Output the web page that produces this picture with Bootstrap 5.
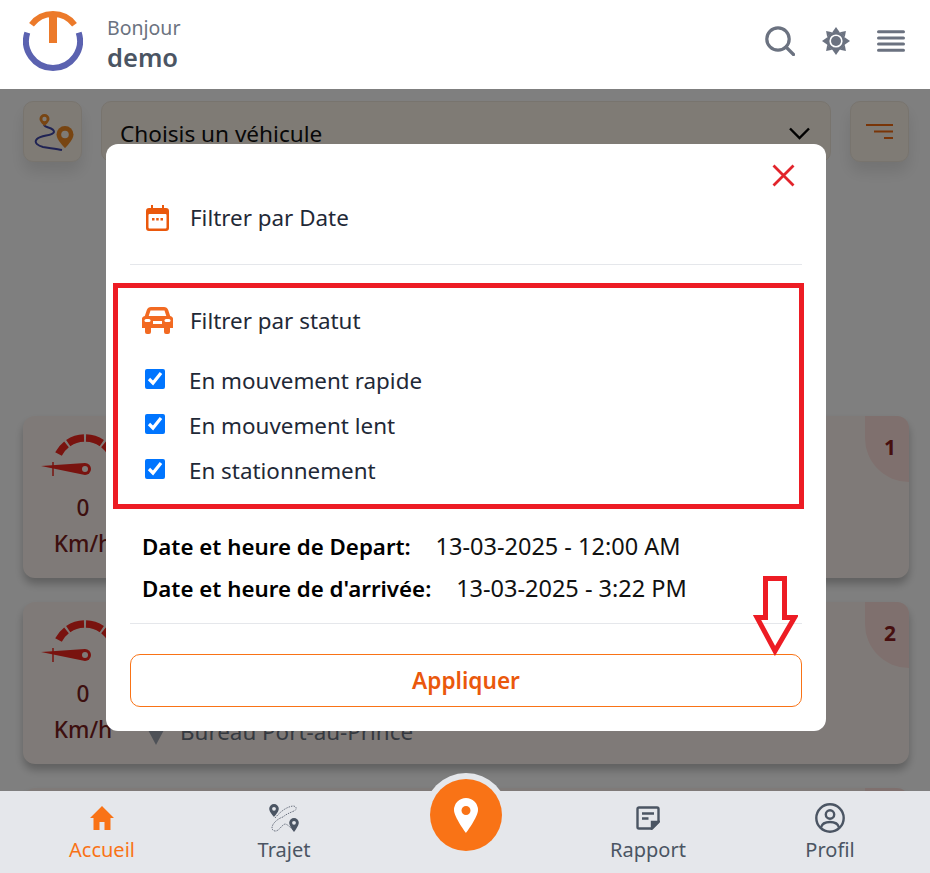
<!DOCTYPE html>
<html lang="fr">
<head>
  <meta charset="UTF-8" />
  <meta name="viewport" content="width=device-width, initial-scale=1.0" />
  <title>Accueil</title>
  <link href="https://cdn.jsdelivr.net/npm/bootstrap@5.3.0/dist/css/bootstrap.min.css" rel="stylesheet" />
  <style>
    body {
      font-family: "Noto Sans", "Open Sans", sans-serif;
      background-color: #fff;
      height: 873px;
      overflow: hidden;
    }
    .top-bar {
      height: 89px;
      padding: 11px 25px 0 23px;
      background: #fff;
    }
    .hello {
      font-size: 19.5px;
      line-height: 26px;
      color: #6b7280;
    }
    .user-name {
      font-size: 25.5px;
      line-height: 32px;
      font-weight: 600;
      color: #4b5563;
    }
    .top-icons {
      gap: 27px;
      padding-top: 15px;
    }
    .page-body {
      padding: 12px 21px 0 23px;
    }
    .tool-row {
      gap: 19px;
    }
    .square-btn {
      width: 59px;
      height: 61px;
      flex: none;
      border-radius: 10px;
      background: #fef6ea;
      border: 1px solid #f1e9dd;
      box-shadow: 0 10px 15px rgba(0, 0, 0, .1);
    }
    .vehicle-select {
      height: 61px;
      border-radius: 10px;
      background: #fef6ea;
      border: 1px solid #f1e9dd;
      padding: 5px 20px 0 18px;
      font-size: 22.6px;
      color: #111;
    }
    .vehicle-select svg {
      margin-top: -2px;
    }
    .map-space {
      height: 254px;
    }
    .trip-card {
      height: 162px;
      margin-bottom: 24px;
      background: #fff5f0;
      border-radius: 12px;
      box-shadow: 0 6px 8px rgba(0, 0, 0, .25);
      position: relative;
      overflow: hidden;
      padding: 17px 0 0 17px;
    }
    .speed-box {
      width: 86px;
      flex: none;
      text-align: center;
      color: #7a1e1e;
      font-size: 22.6px;
      font-weight: 500;
    }
    .speed-box svg {
      display: block;
    }
    .speed-box div {
      line-height: 36px;
    }
    .rank-tab {
      position: absolute;
      top: 0;
      right: 0;
      width: 44px;
      height: 66px;
      background: #ffe0dc;
      border-bottom-left-radius: 44px;
      text-align: right;
      padding: 16px 13px 0 0;
      font-size: 21px;
      font-weight: 700;
      color: #8e1f1f;
    }
    .place {
      font-size: 22.4px;
      color: #6b7280;
      margin: 97px 0 0 21px;
      height: 32px;
    }
    .place svg {
      margin: 9px 15px 0 0;
    }
    .shade {
      position: absolute;
      inset: 89px 0 0 0;
      background: rgba(0, 0, 0, .5);
    }
    .filter-box {
      position: absolute;
      top: 144px;
      left: 106px;
      width: 720px;
      height: 587px;
      background: #fff;
      border: 0;
      border-radius: 12px;
      color: #1f2937;
      padding: 20px 24px 0;
    }
    .close-x {
      position: absolute;
      top: 20px;
      right: 31px;
      line-height: 0;
    }
    .filter-head {
      font-size: 22.4px;
      display: flex;
      align-items: center;
    }
    .date-head {
      height: 101px;
      padding: 7px 0 0 16px;
      border-bottom: 1px solid #e5e7eb;
    }
    .date-head svg {
      margin-right: 21px;
    }
    .status-frame {
      width: 691px;
      height: 226px;
      margin: 18px 0 0 -17px;
      border: 5px solid #ed1c24;
      padding: 16px 0 0 24px;
    }
    .status-frame .filter-head svg {
      margin-right: 17px;
    }
    .status-list {
      margin-top: 21px;
    }
    .status-list .form-check {
      display: flex;
      align-items: center;
      margin: 0;
      padding: 0 0 0 3px;
      height: 45px;
    }
    .status-list .form-check-input {
      width: 20px;
      height: 20px;
      margin: -4px 24px 0 0;
      float: none;
      flex: none;
      appearance: auto;
      -webkit-appearance: auto;
      accent-color: #0075ff;
      background-image: none;
      border: 0;
    }
    .status-list .form-check-label {
      font-size: 22.4px;
    }
    .date-lines {
      padding: 17px 0 0 12px;
      font-size: 22.3px;
      line-height: 42px;
      color: #111;
      height: 115px;
      border-bottom: 1px solid #e5e7eb;
      white-space: nowrap;
    }
    .date-lines b {
      font-weight: 600;
      color: #000;
      margin-right: 19px;
    }
    .date-value {
      font-size: 23.5px;
      line-height: 1;
    }
    .apply-btn {
      display: block;
      width: 100%;
      height: 53px;
      margin-top: 30px;
      background: #fff;
      border: 1px solid #f97316;
      border-radius: 10px;
      color: #ea580c;
      font-size: 22.6px;
      font-weight: 600;
      padding: 0;
    }
    .note-arrow {
      position: absolute;
      left: 753px;
      top: 575px;
    }
    .bottom-nav {
      height: 82px;
      background: #e5e7eb;
      position: relative;
      padding: 0 9px 0 11px;
    }
    .nav-item-box {
      flex: 1 1 0;
      text-align: center;
      font-size: 20px;
      line-height: 28px;
      color: #4b5563;
      padding-top: 11px;
    }
    .icon-slot {
      height: 32px;
      margin-bottom: 2px;
    }
    .nav-item-box.on {
      color: #f97316;
    }
    .map-fab {
      position: absolute;
      left: 424px;
      top: -18px;
      width: 84px;
      height: 84px;
      border-radius: 50%;
      background: #e5e7eb;
      padding: 6px;
    }
    .map-fab span {
      display: flex;
      width: 72px;
      height: 72px;
      border-radius: 50%;
      background: #f97316;
      align-items: center;
      justify-content: center;
    }
    .main-zone {
      height: 702px;
      overflow: hidden;
    }
  </style>
</head>
<body>
  <header class="top-bar d-flex align-items-start">
    <svg width="60" height="60" viewBox="0 0 60 60" fill="none" stroke-width="6">
      <path d="M4.300 21.700A27 27 0 1 0 55.700 21.700" stroke="#5b62b0" />
      <path d="M8.500 13.700A27 27 0 0 1 51.500 13.700" stroke="#ec7a2a" />
      <path d="M30 2V32" stroke="#ec7a2a" stroke-width="8" />
    </svg>
    <div class="ms-4">
      <div class="hello mt-1">Bonjour</div>
      <div class="user-name">demo</div>
    </div>
    <div class="ms-auto d-flex align-items-center top-icons">
      <svg width="30" height="30" viewBox="0 0 30 30" fill="none" stroke="#6b7280" stroke-width="3.200">
        <circle cx="13" cy="13" r="11.200" />
        <path d="M21 21l7.500 7.500" stroke-linecap="round" />
      </svg>
      <svg width="28" height="28" viewBox="-14 -14 28 28" fill="#6b7280">
        <circle r="9.600" />
        <polygon points="-3.500,-9 0,-14 3.500,-9" />
        <polygon points="-3.500,-9 0,-14 3.500,-9" transform="rotate(45)" />
        <polygon points="-3.500,-9 0,-14 3.500,-9" transform="rotate(90)" />
        <polygon points="-3.500,-9 0,-14 3.500,-9" transform="rotate(135)" />
        <polygon points="-3.500,-9 0,-14 3.500,-9" transform="rotate(180)" />
        <polygon points="-3.500,-9 0,-14 3.500,-9" transform="rotate(225)" />
        <polygon points="-3.500,-9 0,-14 3.500,-9" transform="rotate(270)" />
        <polygon points="-3.500,-9 0,-14 3.500,-9" transform="rotate(315)" />
        <circle r="6.600" fill="#fff" />
        <circle r="5" />
      </svg>
      <svg width="28" height="22" viewBox="0 0 28 22" stroke="#6b7280" stroke-width="3" stroke-linecap="round">
        <path d="M1.500 1.700h25M1.500 8h25M1.500 14h25M1.500 20.300h25" />
      </svg>
    </div>
  </header>

  <div class="main-zone">
    <main class="page-body">
      <div class="d-flex tool-row">
        <button class="square-btn d-flex align-items-center justify-content-center p-0" type="button" aria-label="Trajet">
          <svg width="42" height="42" viewBox="0 0 42 42" fill="none">
            <path d="M12 14c1 3 10 2 10 7-1 4-13 3-17 7-4 4 2 7 6 8 6 1 14 2 19 3" stroke="#3f46a8" stroke-width="2" />
            <path d="M12.500 3a5 5 0 0 1 5 5C17.500 11 12.500 15 12.500 15S7.500 11 7.500 8A5 5 0 0 1 12.500 3z" fill="#f08a24" />
            <circle cx="12.500" cy="8" r="2.200" fill="#fef6ea" />
            <path d="M33 15a8.500 8.500 0 0 1 8.500 8.500C41.500 29 33 37 33 37s-8.500-8-8.500-13.500A8.500 8.500 0 0 1 33 15z" fill="#f08a24" />
            <circle cx="33" cy="23.500" r="3.800" fill="#fef6ea" />
          </svg>
        </button>
        <div class="vehicle-select d-flex align-items-center justify-content-between flex-grow-1">
          <span>Choisis un véhicule</span>
          <svg width="21" height="13" viewBox="0 0 21 13" fill="none" stroke="#000" stroke-width="2.400"><path d="M1 1.500l9.500 9.500L20 1.500" /></svg>
        </div>
        <button class="square-btn d-flex align-items-center justify-content-center p-0" type="button" aria-label="Filtrer">
          <svg width="28" height="18" viewBox="0 0 28 18" stroke="#f26a10" stroke-width="2.200"><path d="M0 2h27M8 8.500h19M18 15h9" /></svg>
        </button>
      </div>

      <div class="map-space"></div>

      <section class="trip-card d-flex">
        <div class="speed-box">
          <svg width="86" height="57" viewBox="0 0 86 57">
            <path d="M18.500 21A30 30 0 0 1 26.500 11.400M28.200 10.100A30 30 0 0 1 44 5M46 5A30 30 0 0 1 61.800 10.100M63.500 11.400A30 30 0 0 1 71.500 21" fill="none" stroke="#f2261e" stroke-width="7.500" />
            <path d="M1 33L45 30a6 6 0 1 1 0 12z" fill="#f2261e" />
            <circle cx="45" cy="36" r="3" fill="#fff5f0" />
            <path d="M13 29v14" stroke="#f2261e" stroke-width="1.500" />
          </svg>
          <div>0</div>
          <div>Km/h</div>
        </div>
        <div class="rank-tab">1</div>
      </section>

      <section class="trip-card d-flex">
        <div class="speed-box">
          <svg width="86" height="57" viewBox="0 0 86 57">
            <path d="M18.500 21A30 30 0 0 1 26.500 11.400M28.200 10.100A30 30 0 0 1 44 5M46 5A30 30 0 0 1 61.800 10.100M63.500 11.400A30 30 0 0 1 71.500 21" fill="none" stroke="#f2261e" stroke-width="7.500" />
            <path d="M1 33L45 30a6 6 0 1 1 0 12z" fill="#f2261e" />
            <circle cx="45" cy="36" r="3" fill="#fff5f0" />
            <path d="M13 29v14" stroke="#f2261e" stroke-width="1.500" />
          </svg>
          <div>0</div>
          <div>Km/h</div>
        </div>
        <div class="place d-flex align-items-center">
          <svg width="18" height="17" viewBox="0 0 18 17" fill="#9ca3af"><path d="M0 0h18L9 17z" /></svg>
          <span>Bureau Port-au-Prince</span>
        </div>
        <div class="rank-tab">2</div>
      </section>

      <section class="trip-card">
        <div class="rank-tab"></div>
      </section>
    </main>
  </div>

  <div class="shade"></div>

  <div class="modal-content filter-box">
    <button class="btn p-0 border-0 close-x" type="button" aria-label="Fermer">
      <svg width="23" height="23" viewBox="0 0 23 23" stroke="#e2242b" stroke-width="2.800"><path d="M1.500 1.500l20 20M21.500 1.500l-20 20" /></svg>
    </button>
    <div class="filter-head date-head">
      <svg width="23" height="26" viewBox="0 0 23 26" fill="#ea580c">
        <path d="M5 0h2v3h9V0h2v3h2a3 3 0 0 1 3 3v17a3 3 0 0 1-3 3H3a3 3 0 0 1-3-3V6a3 3 0 0 1 3-3h2z" />
        <rect x="2.500" y="9" width="18" height="14.500" rx="1" fill="#fff" />
        <rect x="6" y="13" width="2.500" height="2.500" />
        <rect x="10.200" y="13" width="2.500" height="2.500" />
        <rect x="14.500" y="13" width="2.500" height="2.500" />
      </svg>
      <span>Filtrer par Date</span>
    </div>

    <div class="status-frame">
      <div class="filter-head">
        <svg width="31" height="27" viewBox="0 0 31 27" fill="#f26a22">
          <path d="M9 0h13c2 0 3.500 1 4.200 3l2 6 1.300.5c.9.400 1.500 1.300 1.500 2.300V21h-3v4a2 2 0 0 1-2 2h-2a2 2 0 0 1-2-2v-4H9v4a2 2 0 0 1-2 2H5a2 2 0 0 1-2-2v-4H0v-9.200c0-1 .6-1.900 1.500-2.300L2.800 9l2-6C5.500 1 7 0 9 0zm-.5 3.500L6.700 9h17.600l-1.800-5.500z" />
          <rect x="2.500" y="12" width="6" height="3" rx="1.500" fill="#fff" />
          <rect x="22.500" y="12" width="6" height="3" rx="1.500" fill="#fff" />
          <rect x="11" y="14" width="9" height="3" fill="#fff" />
        </svg>
        <span>Filtrer par statut</span>
      </div>
      <div class="status-list">
        <div class="form-check">
          <input class="form-check-input" type="checkbox" id="fast" checked />
          <label class="form-check-label" for="fast">En mouvement rapide</label>
        </div>
        <div class="form-check">
          <input class="form-check-input" type="checkbox" id="slow" checked />
          <label class="form-check-label" for="slow">En mouvement lent</label>
        </div>
        <div class="form-check">
          <input class="form-check-input" type="checkbox" id="park" checked />
          <label class="form-check-label" for="park">En stationnement</label>
        </div>
      </div>
    </div>

    <div class="date-lines">
      <div><b>Date et heure de Depart:</b> <span class="date-value">13-03-2025 - 12:00 AM</span></div>
      <div><b>Date et heure de d'arrivée:</b> <span class="date-value">13-03-2025 - 3:22 PM</span></div>
    </div>

    <button class="apply-btn" type="button">Appliquer</button>
  </div>

  <svg class="note-arrow" width="45" height="81" viewBox="0 0 45 81" fill="none" stroke="#ed1c24" stroke-width="5">
    <path d="M12.500 3.500h19v39h10L22 76 4 42.500h8.500z" />
  </svg>

  <nav class="bottom-nav d-flex">
    <div class="nav-item-box on">
      <div class="icon-slot d-flex align-items-center justify-content-center">
        <svg width="24" height="24" viewBox="0 0 24 24" fill="#f97316"><path d="M12 0L0 12h3.500v12H9.500v-8h5v8h6V12H24z" /></svg>
      </div>
      Accueil
    </div>
    <div class="nav-item-box">
      <div class="icon-slot d-flex align-items-center justify-content-center">
        <svg width="30" height="30" viewBox="0 0 30 30" fill="none">
          <path d="M6 15C11 9 17 4 24 3C28 3 28 7 25 8C20 10 16 12 14 14C10 15 3 20 3 25C3 28 7 29 9 27C11 26 13 22 16 21C18 21 21 24 24 27" stroke="#6b7280" stroke-width="1" stroke-dasharray="1.500 1" />
          <path d="M5 1a4.800 4.800 0 0 1 4.800 4.800C9.800 9 5 14 5 14S.2 9 .2 5.800A4.800 4.800 0 0 1 5 1z" fill="#4b5563" />
          <circle cx="5" cy="5.800" r="1.900" fill="#e5e7eb" />
          <path d="M25 15a4.800 4.800 0 0 1 4.800 4.800C29.800 23 25 29 25 29s-4.800-6-4.800-9.200A4.800 4.800 0 0 1 25 15z" fill="#4b5563" />
          <circle cx="25" cy="19.800" r="1.900" fill="#e5e7eb" />
        </svg>
      </div>
      Trajet
    </div>
    <div class="nav-item-box"></div>
    <div class="nav-item-box">
      <div class="icon-slot d-flex align-items-center justify-content-center">
        <svg width="24" height="24" viewBox="0 0 24 24" fill="none" stroke="#4b5563" stroke-width="2.400">
          <path d="M3 1.500h18a1.500 1.500 0 0 1 1.500 1.500v13l-6.500 6.500H3A1.500 1.500 0 0 1 1.500 21V3A1.500 1.500 0 0 1 3 1.500z" />
          <path d="M6 7.500h12M6 12.500h6.500" />
          <path d="M22 16h-6v6z" fill="#4b5563" />
        </svg>
      </div>
      Rapport
    </div>
    <div class="nav-item-box">
      <div class="icon-slot d-flex align-items-center justify-content-center">
        <svg width="30" height="30" viewBox="0 0 30 30" fill="none" stroke="#4b5563" stroke-width="2.400">
          <circle cx="15" cy="15" r="13.700" />
          <circle cx="15" cy="11.500" r="4.200" />
          <path d="M6 24.500c1-4 5-5.500 9-5.500s8 1.500 9 5.500" />
        </svg>
      </div>
      Profil
    </div>
    <div class="map-fab">
      <span>
        <svg width="24" height="35" viewBox="0 0 24 35">
          <path fill-rule="evenodd" d="M12 0a12 12 0 0 1 12 12c0 7-12 23-12 23S0 19 0 12A12 12 0 0 1 12 0zm0 8a4.500 4.500 0 1 0 0 9 4.500 4.500 0 0 0 0-9z" fill="#fff" />
        </svg>
      </span>
    </div>
  </nav>

  <script src="https://cdn.jsdelivr.net/npm/bootstrap@5.3.0/dist/js/bootstrap.bundle.min.js"></script>
</body>
</html>
